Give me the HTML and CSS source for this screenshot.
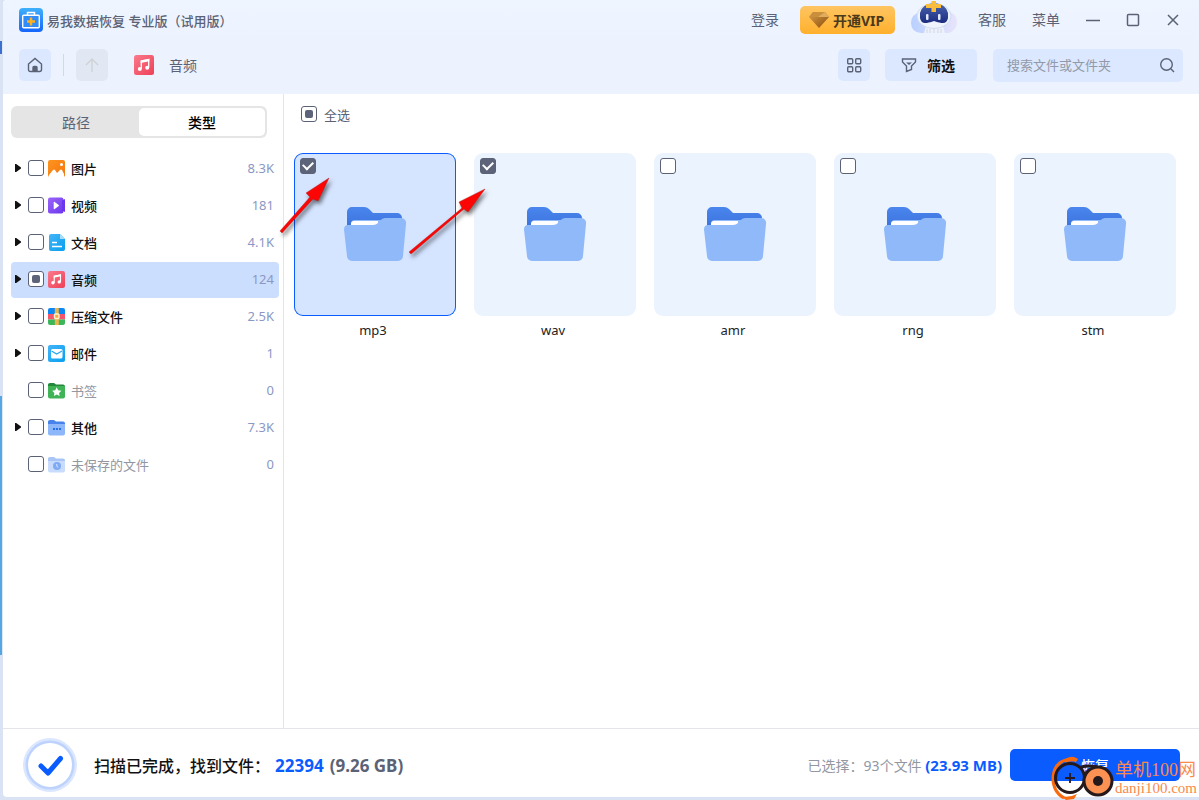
FILE: index.html
```html
<!DOCTYPE html>
<html lang="zh-CN">
<head>
<meta charset="utf-8">
<title>易我数据恢复</title>
<link rel="stylesheet" href="styles.css">
</head>
<body>
<svg class="defs" aria-hidden="true">
  <defs>
    <linearGradient id="gBlue" x1="0" y1="0" x2="0" y2="1"><stop offset="0" stop-color="#3fb0fb"/><stop offset="1" stop-color="#1565fb"/></linearGradient>
    <linearGradient id="gRed" x1="0" y1="0" x2="1" y2="1"><stop offset="0" stop-color="#fa7b8c"/><stop offset="1" stop-color="#ee4058"/></linearGradient>
    <linearGradient id="gOrange" x1="0" y1="0" x2="1" y2="1"><stop offset="0" stop-color="#ff9420"/><stop offset="1" stop-color="#f2760c"/></linearGradient>
    <linearGradient id="gPurple" x1="0" y1="0" x2="1" y2="1"><stop offset="0" stop-color="#9a66f8"/><stop offset="1" stop-color="#6d35ee"/></linearGradient>
    <linearGradient id="gSky" x1="0" y1="0" x2="1" y2="1"><stop offset="0" stop-color="#44b4f8"/><stop offset="1" stop-color="#08a0ee"/></linearGradient>
    <linearGradient id="gGem" x1="0" y1="0" x2="1" y2="1"><stop offset="0" stop-color="#d9a04a"/><stop offset="1" stop-color="#8a4c0b"/></linearGradient>
    <linearGradient id="gBack" x1="0" y1="0" x2="0" y2="1"><stop offset="0" stop-color="#4a86ee"/><stop offset="1" stop-color="#3a72da"/></linearGradient>
    <linearGradient id="gHalo" x1="0" y1="0" x2="1" y2="0"><stop offset="0" stop-color="#b9d0ff"/><stop offset="1" stop-color="#e8e4fb"/></linearGradient>
    <linearGradient id="gVisor" x1="0" y1="0" x2="0" y2="1"><stop offset="0" stop-color="#4a66ae"/><stop offset="1" stop-color="#1c2c80"/></linearGradient>
    <symbol id="music" viewBox="0 0 20 20">
      <rect width="20" height="20" rx="2.500" fill="url(#gRed)"/>
      <path d="M7.300 13.800V6l7.400-1.500v8" fill="none" stroke="#fff" stroke-width="1.300"/>
      <path d="M6.700 5.500l8.600-1.700v2.500L6.700 8z" fill="#fff"/>
      <circle cx="5.800" cy="13.900" r="2" fill="#fff"/><circle cx="13.200" cy="12.800" r="2" fill="#fff"/>
    </symbol>
    <symbol id="folder" viewBox="0 0 64 56">
      <path d="M4 22V6a5 5 0 0 1 5-5h12q3 0 5 2l4 4h24a5 5 0 0 1 5 5v10H4z" fill="url(#gBack)"/>
      <path d="M8 21v-3q0-4 4-4h33v6z" fill="#8fb9f9"/>
      <path d="M8 20v-2q0-3 3-3h24v5z" fill="#fff"/>
      <path d="M5 19h25q3 0 5-2l2-2q2-3 5-3h16a5 5 0 0 1 5 6l-3 32a5 5 0 0 1-5 5H9a5 5 0 0 1-5-5L1 23.500Q1 19 5 19z" fill="#8fb9f9"/>
    </symbol>
  </defs>
</svg>
<div class="window">
  <header class="header">
    <div class="titlebar">
      <svg class="logo" viewBox="0 0 24 24"><rect width="24" height="24" rx="4" fill="url(#gBlue)"/><path d="M8.500 7V4.500h7V7" fill="none" stroke="#fff" stroke-width="1.500"/><rect x="3.700" y="7.200" width="16.600" height="12.600" rx="1" fill="#2f8cf8" stroke="#fff" stroke-width="1.400"/><path d="M12 9.500v8M8 13.500h8" stroke="#ffb01c" stroke-width="2.400"/></svg>
      <h1 class="app-title">易我数据恢复 专业版（试用版）</h1>
      <button class="text-btn login">登录</button>
      <button class="vip"><svg class="gem" viewBox="0 0 20 16"><path d="M4 0h12l4 5-10 11L0 5z" fill="url(#gGem)"/><path d="M4 0h12l4 5H0z" fill="#e0ad5e"/><path d="M4 0h12L9 5H0z" fill="#c98f3c"/></svg>开通VIP</button>
      <svg class="robot" viewBox="0 0 46 34"><path d="M10 12q-10 2-10 11t10 10h27q9-2 9-11t-9-10z" fill="url(#gHalo)"/><path d="M15 26h17l2 7H13z" fill="#edf1fa"/><path d="M16 29v4M19 29v4M23 29v4M27 29v4M30 29v4" stroke="#c4cce0" stroke-width=".700"/><ellipse cx="23" cy="16" rx="17" ry="12.500" fill="#eef3fc" stroke="#c7d5ee" stroke-width=".800"/><path d="M9 13Q11 4 23 3q12 1 14 10v5q-1 5-5 5-3 0-9-2-6 2-9 2-4 0-5-5z" fill="url(#gVisor)"/><rect x="15" y="14" width="2.500" height="6" rx="1" fill="#dfe9ff"/><rect x="27" y="14" width="2.500" height="6" rx="1" fill="#dfe9ff"/><path d="M20.500 1h4.500v3h5V8h-5v4h-4.500V8H15V4h5.500z" fill="#f8bd3e"/></svg>
      <button class="text-btn">客服</button>
      <button class="text-btn">菜单</button>
      <button class="win-btn" aria-label="最小化"><svg viewBox="0 0 14 14"><path d="M0 7.500h14"/></svg></button>
      <button class="win-btn" aria-label="最大化"><svg viewBox="0 0 14 14"><rect x="1.500" y="1.500" width="11" height="11" rx="1"/></svg></button>
      <button class="win-btn" aria-label="关闭"><svg viewBox="0 0 14 14"><path d="M2 2l10 10M12 2L2 12"/></svg></button>
    </div>
    <div class="toolbar">
      <button class="tool" aria-label="主页"><svg class="ico" viewBox="0 0 16 16"><path d="M1.500 7L8 1.500 14.500 7v5.500q0 2-2 2h-9q-2 0-2-2z"/><path d="M6 14V10.500q0-1 1-1h2q1 0 1 1V14z" fill="#5b6275"/></svg></button>
      <span class="divider"></span>
      <button class="tool off" aria-label="上一级" disabled><svg class="ico" viewBox="0 0 16 16"><path d="M8 15V2.500M2 8l6-6 6 6"/></svg></button>
      <svg class="crumb-ico"><use href="#music"/></svg>
      <span class="crumb">音频</span>
      <button class="tool" aria-label="视图"><svg class="ico" viewBox="0 0 16 16"><rect x="1.700" y="1.700" width="5" height="5" rx="1"/><rect x="9.700" y="1.700" width="5" height="5" rx="1"/><rect x="1.700" y="9.700" width="5" height="5" rx="1"/><rect x="9.700" y="9.700" width="5" height="5" rx="1"/></svg></button>
      <button class="tool filter"><svg class="ico" viewBox="0 0 16 16"><path d="M1.500 2h13v3L10.500 9v3.500l-5 2V9l-4-4z"/><path d="M5 5.500h6L8 8z" fill="#5b6275" stroke="none"/></svg>筛选</button>
      <label class="search"><input type="search" placeholder="搜索文件或文件夹" aria-label="搜索文件或文件夹"><svg class="ico" viewBox="0 0 16 16"><circle cx="7.500" cy="7.500" r="5.800"/><path d="M11.800 11.800L15 15"/></svg></label>
    </div>
  </header>
  <main class="main">
    <aside class="sidebar">
      <div class="tabs"><button class="tab">路径</button><button class="tab active">类型</button></div>
      <ul class="tree">
        <li class="row"><button class="caret" aria-label="展开"></button><input type="checkbox" class="check" id="t1"><svg class="type" viewBox="0 0 17 17"><rect width="17" height="17" rx="2" fill="url(#gOrange)"/><path d="M1 17v-2l4-5q1-1 2 0l2 3 3-3q1-1 2 0l2 4v3z" fill="#fff"/><circle cx="13.500" cy="4.500" r="1.500" fill="#fff"/></svg><label for="t1">图片</label><span class="count">8.3K</span></li>
        <li class="row"><button class="caret" aria-label="展开"></button><input type="checkbox" class="check" id="t2"><svg class="type" viewBox="0 0 17 17"><rect y=".500" width="15.500" height="16" rx="2" fill="url(#gPurple)"/><path d="M14 3.500l3-1.500v13l-3-1.500z" fill="#6a36ee"/><path d="M5.700 5.500q0-1 1-.5l4 3q.6.500 0 1l-4 3q-1 .500-1-.5z" fill="#fff"/></svg><label for="t2">视频</label><span class="count">181</span></li>
        <li class="row"><button class="caret" aria-label="展开"></button><input type="checkbox" class="check" id="t3"><svg class="type" viewBox="0 0 17 17"><path d="M3 0h9l5 5v10q0 2-2 2H3q-2 0-2-2V2q0-2 2-2z" fill="url(#gSky)"/><path d="M12 0l5 5h-5z" fill="#a8ddfc"/><path d="M4 8.500h5M4 12.500h10" stroke="#fff" stroke-width="1.700"/></svg><label for="t3">文档</label><span class="count">4.1K</span></li>
        <li class="row selected"><button class="caret" aria-label="展开"></button><input type="checkbox" class="check partial" id="t4"><svg class="type"><use href="#music"/></svg><label for="t4">音频</label><span class="count">124</span></li>
        <li class="row"><button class="caret" aria-label="展开"></button><input type="checkbox" class="check" id="t5"><svg class="type" viewBox="0 0 17 17"><path d="M0 6V2q0-2 2-2h13q2 0 2 2v4z" fill="#0c87f4"/><path d="M0 6h17v5.500H0z" fill="#f4576c"/><path d="M0 11.500h17V15q0 2-2 2H2q-2 0-2-2z" fill="#3db559"/><path d="M6.800 0h4v17h-4z" fill="#eab54b"/><rect x="6.500" y="6" width="4.500" height="4.500" rx="1" fill="#f8ad3c" stroke="#fff3d0" stroke-width="1.400"/></svg><label for="t5">压缩文件</label><span class="count">2.5K</span></li>
        <li class="row"><button class="caret" aria-label="展开"></button><input type="checkbox" class="check" id="t6"><svg class="type" viewBox="0 0 17 17"><rect width="17" height="17" rx="2" fill="url(#gSky)"/><rect x="3" y="4" width="11.500" height="9.500" rx="1.500" fill="#fff"/><path d="M3.500 6l5.200 3L14 6" fill="none" stroke="#27a9f2" stroke-width="1.300"/></svg><label for="t6">邮件</label><span class="count">1</span></li>
        <li class="row empty"><span class="caret-space"></span><input type="checkbox" class="check" id="t7"><svg class="type" viewBox="0 0 17 17"><path d="M0 8V2.500Q0 1 2 1h4l2 1.500h7q2 0 2 2V8z" fill="#23893a"/><path d="M0 4h17v10.500q0 2-2 2H2q-2 0-2-2z" fill="#3fb355"/><path d="M8.700 5.300l1.500 3 3.200.4-2.300 2.200.5 3.200-2.900-1.500-2.800 1.500.5-3.200L4.100 8.700l3.100-.4z" fill="#fff"/></svg><label for="t7">书签</label><span class="count">0</span></li>
        <li class="row"><button class="caret" aria-label="展开"></button><input type="checkbox" class="check" id="t8"><svg class="type" viewBox="0 0 17 17"><path d="M0 8V2.500Q0 1 2 1h4l2 1.500h7q2 0 2 2V8z" fill="#4783ea"/><path d="M0 5h17v9.500q0 2-2 2H2q-2 0-2-2z" fill="#8db7f9"/><path d="M5 9h2v2H5zM8 9h2v2H8zM11 9h2v2h-2z" fill="#216fef"/></svg><label for="t8">其他</label><span class="count">7.3K</span></li>
        <li class="row empty"><span class="caret-space"></span><input type="checkbox" class="check" id="t9"><svg class="type" viewBox="0 0 17 17"><path d="M0 8V2.500Q0 1 2 1h4l2 1.500h7q2 0 2 2V8z" fill="#a9c5f6"/><path d="M0 5h17v9.500q0 2-2 2H2q-2 0-2-2z" fill="#c9dcfc"/><circle cx="9" cy="10" r="4" fill="#7faaf4"/><path d="M8.800 8v2.300l1.400 1" fill="none" stroke="#dce8ff"/></svg><label for="t9">未保存的文件</label><span class="count">0</span></li>
      </ul>
    </aside>
    <section class="content">
      <div class="select-all"><input type="checkbox" class="check partial" id="all"><label for="all">全选</label></div>
      <div class="grid">
        <div class="item"><div class="tile picked"><input type="checkbox" class="check" id="f1" checked><svg class="folder"><use href="#folder"/></svg></div><label for="f1">mp3</label></div>
        <div class="item"><div class="tile"><input type="checkbox" class="check" id="f2" checked><svg class="folder"><use href="#folder"/></svg></div><label for="f2">wav</label></div>
        <div class="item"><div class="tile"><input type="checkbox" class="check" id="f3"><svg class="folder"><use href="#folder"/></svg></div><label for="f3">amr</label></div>
        <div class="item"><div class="tile"><input type="checkbox" class="check" id="f4"><svg class="folder"><use href="#folder"/></svg></div><label for="f4">rng</label></div>
        <div class="item"><div class="tile"><input type="checkbox" class="check" id="f5"><svg class="folder"><use href="#folder"/></svg></div><label for="f5">stm</label></div>
      </div>
      <svg class="arrows" viewBox="0 0 220 90" aria-hidden="true">
        <g fill="#fb0505" stroke="#b01818" stroke-width=".400"><path d="M1 55L31 21l-4-4L50 2 39 25l-5-2L3 57z"/><path d="M130 76l53-44-3-6 26-13-17 23-4-3-53 45z"/></g>
      </svg>
    </section>
  </main>
  <footer class="footer">
    <svg class="done" viewBox="0 0 54 54"><circle cx="27" cy="27" r="27" fill="#dbe7ff"/><circle cx="27" cy="27" r="24.500" fill="#bdd3fe"/><circle cx="27" cy="27" r="22" fill="#fff"/><path d="M18 28l7 7L37.500 20.500" fill="none" stroke="#0a5cff" stroke-width="5" stroke-linecap="round" stroke-linejoin="round"/></svg>
    <p class="status">扫描已完成，找到文件：<b class="found">22394</b><b class="size">(9.26 GB)</b></p>
    <p class="chosen">已选择：93个文件 <b>(23.93 MB)</b></p>
    <button class="recover">恢复</button>
    <div class="mark" aria-hidden="true">
      <svg viewBox="0 0 64 44"><path d="M21 3Q3 4 2 22q0 14 11 20" fill="none" stroke="#f9690e" stroke-width="3"/><path d="M14 4q6-6 13-1l-2 3q-5-2-11 1z" fill="#f9690e"/><circle cx="19" cy="22" r="14.500" fill="none" stroke="#26191b" stroke-width="3"/><path d="M14 22h10M19 17v10" stroke="#26191b" stroke-width="1.800"/><path d="M8 39q8 4 18-1l-3 5-8 1z" fill="#f9690e"/><path d="M30 11q8-2 16 0" fill="none" stroke="#26191b" stroke-width="3"/><circle cx="47" cy="25" r="14" fill="#fb9153" stroke="#26191b" stroke-width="3"/><circle cx="47" cy="25" r="5" fill="#26191b"/></svg>
      <div class="mark-text"><span class="mark-name">单机100网</span><span class="mark-url">danji100.com</span></div>
    </div>
  </footer>
</div>
</body>
</html>
```

FILE: styles.css
```css
* { box-sizing: border-box; }
body {
  margin: 0;
  min-height: 100vh;
  display: flex;
  padding: 0 0 3px 3px;
  background: linear-gradient(90deg, #57a6e4 2px, #dce7fa 2px) 0 396px / 100% 259px no-repeat, linear-gradient(90deg, #3d6fce 2px, #dce7fa 2px) 0 41px / 100% 13px no-repeat, #d9e3f4;
  font-family: "Noto Sans", "Noto Sans CJK SC", sans-serif;
  font-size: 13px;
  color: #5b6275;
}
button, input { font: inherit; color: inherit; margin: 0; }
button { border: 0; padding: 0; background: none; }
p, h1, ul { margin: 0; padding: 0; }
.defs { position: absolute; width: 0; height: 0; }
.window { flex: 1; min-width: 0; display: flex; flex-direction: column; background: #fff; border-radius: 4px 0 0 4px; }
.header { background: linear-gradient(#eff5ff 0, #ecf3ff 40px); padding-bottom: 13px; border-radius: 4px 0 0 0; }
.titlebar { display: flex; align-items: center; height: 40px; padding: 0 19px 0 16px; }
.logo { width: 24px; height: 24px; margin-right: 4px; }
.app-title { font-size: 13px; font-weight: 500; flex: 1; white-space: nowrap; }
.text-btn { font-size: 14px; line-height: 20px; margin-left: 26px; }
.vip { display: flex; align-items: center; gap: 4px; height: 28px; width: 95px; padding-left: 9px; margin: 0 16px 0 21px; border-radius: 5px; background: linear-gradient(#ffc562, #ffb02c); color: #4b3a1c; font-size: 14px; font-weight: 700; }
.gem { width: 20px; height: 16px; }
.robot { width: 46px; height: 34px; margin: 0 -5px 6px 0; align-self: flex-start; }
.win-btn { width: 14px; height: 14px; margin-left: 26px; }
.win-btn svg { display: block; width: 14px; height: 14px; fill: none; stroke: #5b6275; stroke-width: 1.500; }
.toolbar { display: flex; align-items: center; padding: 9px 16px 0; height: 41px; }
.tool { width: 32px; height: 32px; border-radius: 5px; background: #dbe8ff; display: flex; align-items: center; justify-content: center; }
.tool.off { background: #e1e8f3; }
.tool.off .ico { stroke: #cfd3d6; }
.ico { width: 16px; height: 16px; fill: none; stroke: #5b6275; stroke-width: 1.400; }
.divider { width: 1px; height: 22px; margin: 0 12px; background: #d3d9e3; }
.crumb-ico { width: 20px; height: 20px; margin: 0 15px 0 26px; }
.crumb { font-size: 14px; flex: 1; }
.filter { width: 92px; gap: 10px; margin: 0 16px 0 15px; padding-right: 6px; font-size: 14px; font-weight: 700; color: #111; }
.search { display: flex; align-items: center; width: 190px; height: 33px; padding: 0 8px 0 14px; border-radius: 5px; background: #dbe8ff; }
.search input { flex: 1; min-width: 0; border: 0; padding: 0; outline: 0; background: none; }
.search input::placeholder { color: #9299a8; }
.main { flex: 1; display: flex; min-height: 0; }
.sidebar { width: 281px; padding: 12px 4px 12px 8px; border-right: 1px solid #e3e5e8; }
.tabs { display: flex; width: 256px; height: 32px; padding: 2px; border-radius: 6px; background: #e5e5e5; font-size: 14px; }
.tab { flex: 1; border-radius: 5px; }
.tab.active { background: #fff; color: #000; font-weight: 500; }
.tree { list-style: none; display: grid; gap: 1px; margin-top: 13px; }
.row { display: flex; align-items: center; height: 36px; padding: 0 5px 2px 4px; border-radius: 4px; }
.row.selected { background: #ccdefe; }
.row label { flex: 1; margin-left: 6px; color: #111; font-weight: 500; }
.row.empty label { color: #9297a2; font-weight: 400; }
.caret { width: 6px; height: 8px; background: #111; clip-path: polygon(0 0, 20% 0, 100% 45%, 100% 55%, 20% 100%, 0 100%); }
.caret-space { width: 6px; }
.row .check { margin: 0 4px 0 7px; }
.check { appearance: none; display: grid; place-items: center; width: 16px; height: 16px; border: 1px solid #5b6275; border-radius: 3px; background: #fff; flex: none; }
.check:checked { background: #5d647a; }
.check:checked::after { content: ""; width: 8px; height: 5px; border: solid #fff; border-width: 0 0 2px 2px; rotate: -45deg; margin-bottom: 3px; }
.check.partial::after { content: ""; width: 8px; height: 8px; border-radius: 2px; background: #5d647a; }
.type { width: 17px; height: 17px; }
.count { color: #8b98c4; }
.content { position: relative; flex: 1; min-width: 0; padding: 10px; }
.select-all { display: flex; align-items: center; gap: 7px; height: 20px; padding-left: 7px; }
.grid { display: grid; grid-template-columns: repeat(auto-fill, 162px); gap: 18px; margin-top: 29px; }
.item { display: flex; flex-direction: column; color: #222; text-align: center; }
.item label { margin-top: 5px; padding-right: 4px; }
.tile { display: flex; flex-direction: column; height: 163px; padding: 5px 6px; border-radius: 9px; background: #ebf3ff; }
.tile.picked { background: #d5e4ff; box-shadow: inset 0 0 0 1px #0a5cff; }
.folder { width: 64px; height: 56px; margin: 32px 0 0 43px; }
.arrows { position: absolute; left: -5px; top: 82px; width: 220px; height: 90px; filter: drop-shadow(2px 3px 2px #0008); pointer-events: none; }
.footer { position: relative; display: flex; align-items: center; height: 69px; padding: 4px 19px 0 20px; border-top: 1px solid #e3e5e8; }
.done { width: 54px; height: 54px; margin-right: 17px; }
.status { flex: 1; font-size: 16px; font-weight: 500; color: #111; }
.found, .size { font-size: 17px; }
.found { margin: 0 6px 0 5px; color: #0a5cff; }
.size { color: #5b6275; }
.chosen { font-size: 14px; color: #9297a2; }
.chosen b { font-size: 15px; color: #0a5cff; }
.recover { width: 170px; height: 32px; margin-left: 8px; border-radius: 5px; background: #0a5cff; color: #fff; font-size: 14px; font-weight: 500; }
.mark { position: absolute; right: 2px; bottom: -3px; display: flex; align-items: center; color: #fa8a4c; }
.mark svg { width: 64px; height: 44px; }
.mark-text { display: flex; flex-direction: column; font-family: "Liberation Serif", "Noto Sans CJK SC", serif; }
.mark-name { font-size: 18px; line-height: 20px; }
.mark-url { font-size: 15px; line-height: 16px; }
```
